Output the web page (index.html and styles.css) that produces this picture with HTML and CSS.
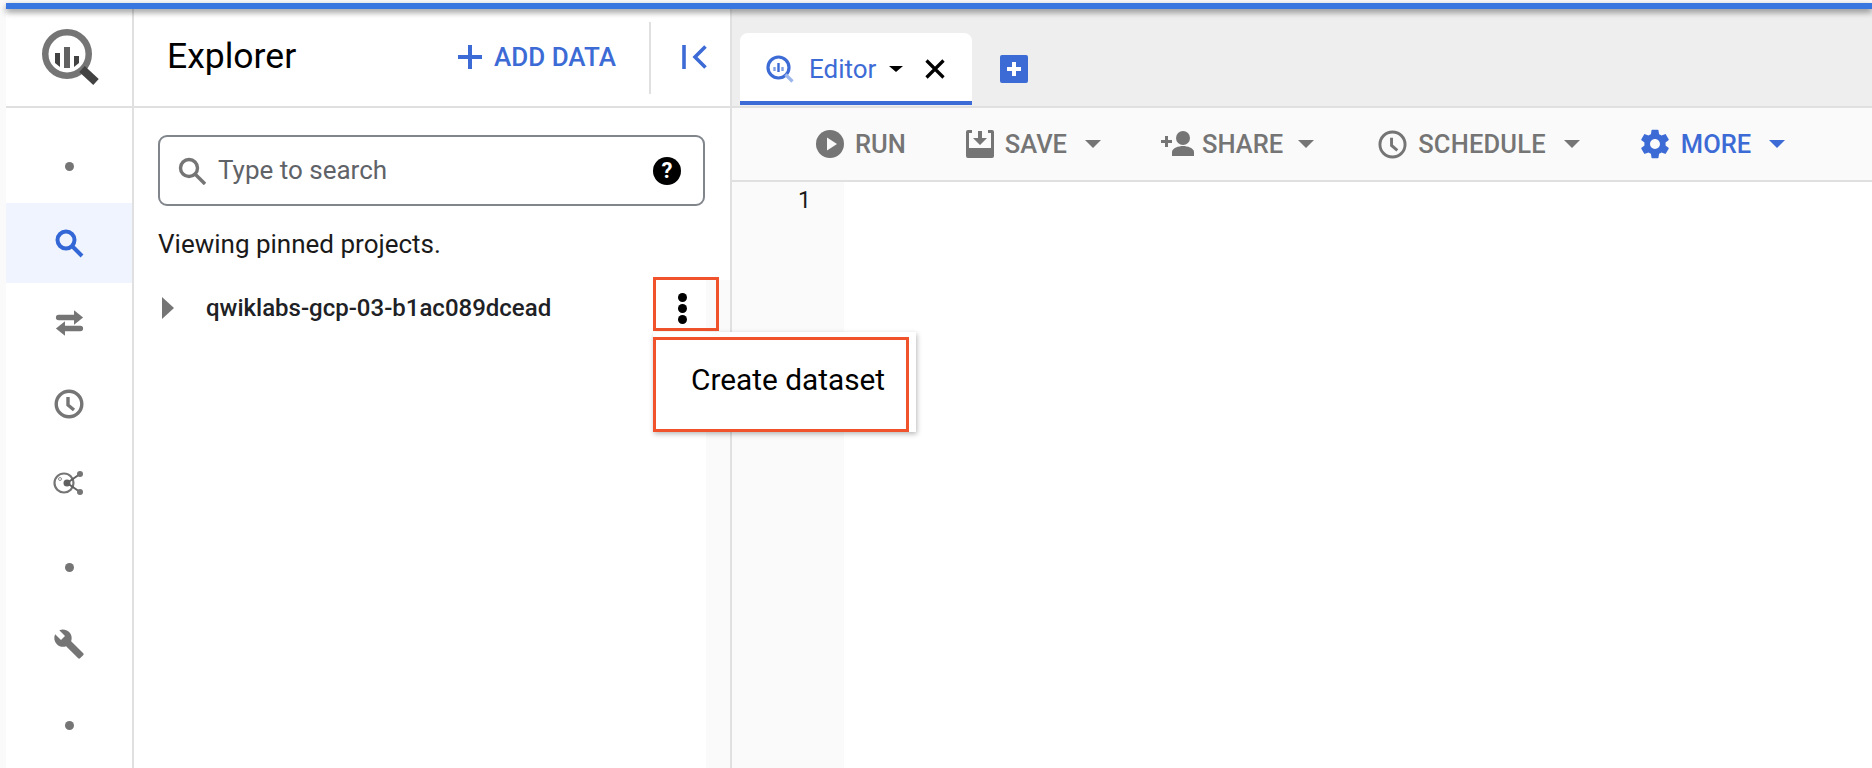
FILE: index.html
```html
<!DOCTYPE html>
<html lang="en">
<head>
<meta charset="utf-8">
<title>BigQuery</title>
<link rel="stylesheet" href="styles.css">
</head>
<body>
<div class="topline"></div>
<div class="shell">
  <nav class="rail">
    <div class="logo">
      <svg width="72" height="72" viewBox="0 0 72 72">
        <circle cx="31" cy="30" r="21.750" fill="none" stroke="#757575" stroke-width="6.500"/>
        <path d="M46 45l14 13" stroke="#424242" stroke-width="8"/>
        <rect x="28" y="23" width="6" height="21" fill="#616161"/>
        <path d="M19 29h5v14l-5-4z" fill="#424242"/>
        <path d="M38 32h5v7l-5 4z" fill="#424242"/>
      </svg>
    </div>
    <ul class="rail-list">
      <li class="rail-item"><span class="dot dot-first"></span></li>
      <li class="rail-item active">
        <svg width="30" height="30" viewBox="0 0 30 30"><circle cx="12" cy="12" r="8.500" fill="none" stroke="#3367d6" stroke-width="4"/><path d="M18 18l10 10" stroke="#3367d6" stroke-width="4"/></svg>
      </li>
      <li class="rail-item">
        <svg width="29" height="28" viewBox="0 0 32 30"><path d="M4 6h17V1l10 8-10 8v-5H4a3 3 0 0 1 0-6z" fill="#757575"/><path d="M28 18H11v-5L1 21l10 8v-5h17a3 3 0 0 0 0-6z" fill="#757575"/></svg>
      </li>
      <li class="rail-item">
        <svg width="30" height="30" viewBox="0 0 30 30"><circle cx="15" cy="15" r="12.800" fill="none" stroke="#757575" stroke-width="3.400"/><path d="M14 8v8l6 5" fill="none" stroke="#757575" stroke-width="3.400"/></svg>
      </li>
      <li class="rail-item item-up">
        <svg width="32" height="30" viewBox="0 0 32 30"><circle cx="11" cy="15" r="9.500" fill="none" stroke="#757575" stroke-width="2.200"/><circle cx="14" cy="15" r="3.500" fill="#616161"/><circle cx="7" cy="11" r="1.500" fill="#fff" stroke="#757575" stroke-width=".8"/><path d="M14 15l13-9M14 15l13 9" stroke="#616161" stroke-width="2"/><circle cx="27" cy="6" r="3" fill="#757575"/><circle cx="27" cy="24" r="3" fill="#757575"/></svg>
      </li>
      <li class="rail-item"><span class="dot dot-mid"></span></li>
      <li class="rail-item item-up">
        <svg width="32" height="32" viewBox="0 0 24 24"><path fill="#757575" d="M22.700 19l-9.100-9.100c.9-2.300.4-5-1.500-6.900-2-2-5-2.400-7.400-1.300L9 6 6 9 1.600 4.700C.4 7.100.9 10.100 2.900 12.100c1.900 1.900 4.600 2.400 6.900 1.500l9.100 9.100c.4.400 1 .4 1.400 0l2.300-2.300c.5-.4.500-1.100.1-1.400z"/></svg>
      </li>
      <li class="rail-item"><span class="dot"></span></li>
    </ul>
  </nav>

  <aside class="explorer">
    <header class="ex-head">
      <h1 class="ex-title">Explorer</h1>
      <button class="add-data">
        <svg width="24" height="24" viewBox="0 0 24 24"><path d="M10 0h4v10h10v4H14v10h-4V14H0v-4h10z" fill="#3d6bd6"/></svg>
        <span>ADD DATA</span>
      </button>
      <div class="collapse">
        <svg width="25" height="24" viewBox="0 0 25 24"><path d="M2 0v24" stroke="#3d6bd6" stroke-width="3.600"/><path d="M23.500 1.500L13 12l10.500 10.500" fill="none" stroke="#3d6bd6" stroke-width="3.600"/></svg>
      </div>
    </header>
    <div class="ex-body">
      <div class="ex-content">
        <div class="search">
          <svg class="search-ic" width="28" height="28" viewBox="0 0 28 28"><circle cx="11" cy="11" r="8.500" fill="none" stroke="#757575" stroke-width="3.400"/><path d="M17 17l10 10" stroke="#757575" stroke-width="3.400"/></svg>
          <span class="placeholder">Type to search</span>
          <span class="help">?</span>
        </div>
        <p class="pinned">Viewing pinned projects.</p>
        <div class="project">
          <svg class="tri" width="12" height="22" viewBox="0 0 12 22"><path d="M0 0l12 11L0 22z" fill="#757575"/></svg>
          <span class="proj-name">qwiklabs-gcp-03-b1ac089dcead</span>
        </div>
      </div>
      <div class="ex-strip"></div>
    </div>
  </aside>

  <main class="main">
    <div class="tabs">
      <div class="tab">
        <svg width="28" height="28" viewBox="0 0 28 28"><circle cx="12.500" cy="12.500" r="10.500" fill="none" stroke="#3d6bd6" stroke-width="3.200"/><path d="M19.500 19.500l7 7" stroke="#9db7ec" stroke-width="3.200"/><path d="M12.500 8v9" stroke="#3d6bd6" stroke-width="2.400"/><path d="M8.500 12v4M16.500 12v4" stroke="#7f9fe3" stroke-width="2.400"/></svg>
        <span class="tab-label">Editor</span>
        <span class="caret caret-black"></span>
        <svg class="tab-x" width="20" height="20" viewBox="0 0 20 20"><path d="M1.500 1.500l17 17M18.500 1.500l-17 17" stroke="#000" stroke-width="3.200"/></svg>
      </div>
      <div class="new-tab">
        <svg width="14" height="14" viewBox="0 0 14 14"><path d="M5 0h4v5h5v4H9v5H5V9H0V5h5z" fill="#fff"/></svg>
      </div>
    </div>
    <div class="toolbar">
      <div class="tool">
        <svg width="28" height="28" viewBox="0 0 28 28"><circle cx="14" cy="14" r="14" fill="#757575"/><path d="M11 7.500l10 6.500-10 6.500z" fill="#fafafa"/></svg>
        <span>RUN</span>
      </div>
      <div class="tool">
        <svg width="28" height="28" viewBox="0 0 28 28"><path fill-rule="evenodd" fill="#757575" d="M2 0h4v3H3v15h22V3h-3V0h4a2 2 0 0 1 2 2v24a2 2 0 0 1-2 2H2a2 2 0 0 1-2-2V2a2 2 0 0 1 2-2z"/><path d="M12 1h4v7h5l-7 7-7-7h5z" fill="#757575"/></svg>
        <span>SAVE</span>
        <span class="caret"></span>
      </div>
      <div class="tool tool-share">
        <svg width="33" height="26" viewBox="0 0 33 26"><circle cx="22" cy="7" r="7" fill="#757575"/><path d="M11 25v-4c0-4 7-6 11-6s11 2 11 6v4z" fill="#757575"/><path d="M4 5h3v4h4v3H7v4H4v-4H0V9h4z" fill="#757575"/></svg>
        <span>SHARE</span>
        <span class="caret"></span>
      </div>
      <div class="tool tool-schedule">
        <svg width="29" height="29" viewBox="0 0 30 30"><circle cx="15" cy="15" r="13" fill="none" stroke="#757575" stroke-width="3"/><path d="M14 8v8l6 5" fill="none" stroke="#757575" stroke-width="3"/></svg>
        <span>SCHEDULE</span>
        <span class="caret"></span>
      </div>
      <div class="tool tool-more">
        <svg class="gear" width="34" height="34" viewBox="0 0 24 24"><path fill="#3d6bd6" d="M19.430 12.980c.04-.32.07-.64.07-.98s-.03-.66-.07-.98l2.110-1.650c.19-.15.24-.42.120-.64l-2-3.460c-.12-.22-.39-.3-.61-.22l-2.490 1c-.52-.4-1.080-.73-1.690-.98l-.38-2.650C14.460 2.180 14.250 2 14 2h-4c-.25 0-.46.18-.49.42l-.38 2.650c-.61.25-1.170.59-1.690.98l-2.490-1c-.23-.09-.49 0-.61.22l-2 3.460c-.13.22-.07.49.12.64l2.110 1.650c-.04.32-.07.65-.07.98s.03.66.07.98l-2.110 1.650c-.19.15-.24.42-.12.64l2 3.460c.12.22.39.3.61.22l2.490-1c.52.4 1.080.73 1.690.98l.38 2.650c.03.24.24.42.49.42h4c.25 0 .46-.18.49-.42l.38-2.650c.61-.25 1.170-.59 1.690-.98l2.490 1c.23.09.49 0 .61-.22l2-3.460c.12-.22.07-.49-.12-.64l-2.110-1.650zM12 15.500c-1.930 0-3.500-1.570-3.500-3.500s1.570-3.500 3.500-3.500 3.500 1.570 3.500 3.500-1.570 3.500-3.500 3.500z"/></svg>
        <span>MORE</span>
        <span class="caret caret-blue"></span>
      </div>
    </div>
    <div class="editor">
      <div class="gutter">1</div>
      <div class="code"></div>
    </div>
  </main>
</div>

<div class="kebab-box"><span></span><span></span><span></span></div>
<div class="menu">
  <div class="menu-item">Create dataset</div>
</div>
</body>
</html>
```
FILE: styles.css
```css
* { box-sizing: border-box; }
html, body { margin: 0; height: 100%; }
body {
  width: 1872px;
  height: 768px;
  overflow: hidden;
  position: relative;
  background: #fafafa;
  font-family: Roboto, "Liberation Sans", sans-serif;
  padding-top: 3px;
  padding-left: 6px;
  display: flex;
  flex-direction: column;
}
.topline {
  height: 6px;
  flex: none;
  background: #3a76e0;
  box-shadow: 0 3px 6px rgba(0, 0, 0, .45);
  position: relative;
  z-index: 2;
}
.shell { flex: 1; display: flex; min-height: 0; }

.rail {
  width: 128px;
  flex: none;
  background: #fff;
  border-right: 2px solid #e0e0e0;
  display: flex;
  flex-direction: column;
}
.logo {
  height: 99px;
  flex: none;
  margin-right: -2px;
  border-bottom: 2px solid #e0e0e0;
  display: flex;
  padding: 15px 0 0 30px;
}
.rail-list { list-style: none; margin: 0; padding: 14px 0 0; }
.rail-item {
  height: 80.500px;
  display: flex;
  align-items: center;
  justify-content: center;
}
.rail-item.active { background: #eff4fe; }
.item-up { padding-bottom: 3px; }
.dot { width: 9px; height: 9px; border-radius: 50%; background: #757575; }
.dot-first { margin-top: 9px; }
.dot-mid { margin-top: 5px; }

.explorer {
  width: 598px;
  flex: none;
  display: flex;
  flex-direction: column;
  background: #fff;
  border-right: 2px solid #e0e0e0;
}
.ex-head {
  height: 99px;
  flex: none;
  border-bottom: 2px solid #e0e0e0;
  display: flex;
  align-items: center;
  padding: 0 0 0 33px;
}
.ex-title { margin: 0 0 4px; font-size: 35.500px; font-weight: 400; color: #000; width: 291px; flex: none; }
.add-data {
  border: 0;
  background: none;
  padding: 0 0 2px;
  display: flex;
  align-items: center;
  gap: 12px;
  font: 500 26px Roboto, sans-serif;
  color: #3d6bd6;
  width: 193px;
  flex: none;
  height: 72px;
  border-right: 2px solid #e0e0e0;
}
.collapse { padding: 0 0 2px 31px; display: flex; }

.ex-body { flex: 1; display: flex; min-height: 0; }
.ex-content { flex: 1; padding: 27px 0 0 24px; }
.ex-strip { width: 24px; flex: none; background: #fafafa; margin-top: 172px; }
.search {
  width: 547px;
  height: 71px;
  border: 2px solid #80868b;
  border-radius: 9px;
  display: flex;
  align-items: center;
  padding: 0 22px 0 18px;
}
.placeholder { font-size: 26px; color: #5f6368; margin: 0 0 2px 12px; flex: 1; }
.help {
  width: 28px;
  height: 28px;
  border-radius: 50%;
  background: #000;
  color: #fff;
  font-size: 22px;
  font-weight: 700;
  line-height: 28px;
  text-align: center;
}
.pinned { margin: 23px 0 0; font-size: 26px; color: #1a1a1a; line-height: 30px; }
.project { display: flex; align-items: center; margin-top: 33px; padding-left: 4px; height: 32px; }
.proj-name { font-size: 24px; font-weight: 500; color: #202124; margin-left: 32px; }

.main { flex: 1; display: flex; flex-direction: column; min-width: 0; }
.tabs {
  height: 99px;
  flex: none;
  background: #eee;
  border-bottom: 2px solid #e0e0e0;
  display: flex;
  align-items: flex-end;
  padding-left: 8px;
}
.tab {
  width: 232px;
  height: 72px;
  background: #fff;
  border-radius: 8px 8px 0 0;
  border-bottom: 4px solid #3d6bd6;
  display: flex;
  align-items: center;
  padding: 4px 0 0 26px;
  margin-bottom: 1px;
}
.tab-label { font-size: 26px; color: #3d6bd6; margin-left: 15px; }
.caret {
  width: 0;
  height: 0;
  border-left: 8px solid transparent;
  border-right: 8px solid transparent;
  border-top: 8px solid #757575;
  margin-left: 7px;
}
.caret-black { border-top-color: #000; border-left-width: 7px; border-right-width: 7px; border-top-width: 6px; margin-left: 13px; }
.caret-blue { border-top-color: #3d6bd6; }
.tab-x { margin-left: 22px; }
.new-tab {
  width: 28px;
  height: 28px;
  background: #3d6bd6;
  border-radius: 2px;
  margin: 0 0 23px 28px;
  display: flex;
  align-items: center;
  justify-content: center;
}
.toolbar {
  height: 74px;
  flex: none;
  background: #fafafa;
  border-bottom: 2px solid #e0e0e0;
  display: flex;
  align-items: center;
  gap: 60px;
  padding-left: 84px;
  font-size: 25.500px;
  font-weight: 500;
  color: #757575;
}
.tool { display: flex; align-items: center; gap: 11px; }
.tool-share { gap: 8px; }
.tool-schedule { margin-left: 4px; letter-spacing: .2px; }
.tool-more { color: #3d6bd6; }
.gear { margin: 0 -2px; }
.editor { flex: 1; display: flex; min-height: 0; background: #fff; }
.gutter {
  width: 112px;
  flex: none;
  background: #fafafa;
  text-align: right;
  padding: 4px 33px 0 0;
  font-size: 23px;
  line-height: 30px;
  color: #1a1a1a;
}
.code { flex: 1; }

.kebab-box {
  position: absolute;
  left: 653px;
  top: 277px;
  width: 66px;
  height: 54px;
  border: 3px solid #f0522b;
  padding: 8px 7px 0 0;
  display: flex;
  flex-direction: column;
  align-items: center;
  justify-content: center;
  gap: 2px;
}
.kebab-box span { width: 9px; height: 9px; border-radius: 50%; background: #000; }
.menu {
  position: absolute;
  left: 653px;
  top: 332px;
  width: 263px;
  height: 100px;
  background: #fff;
  box-shadow: 1px 2px 5px rgba(0, 0, 0, .28);
}
.menu-item {
  position: absolute;
  left: 0;
  top: 5px;
  width: 256px;
  height: 95px;
  border: 3px solid #f0522b;
  padding: 22px 0 0 35px;
  font-size: 29.800px;
  line-height: 36px;
  color: #000;
}
```
